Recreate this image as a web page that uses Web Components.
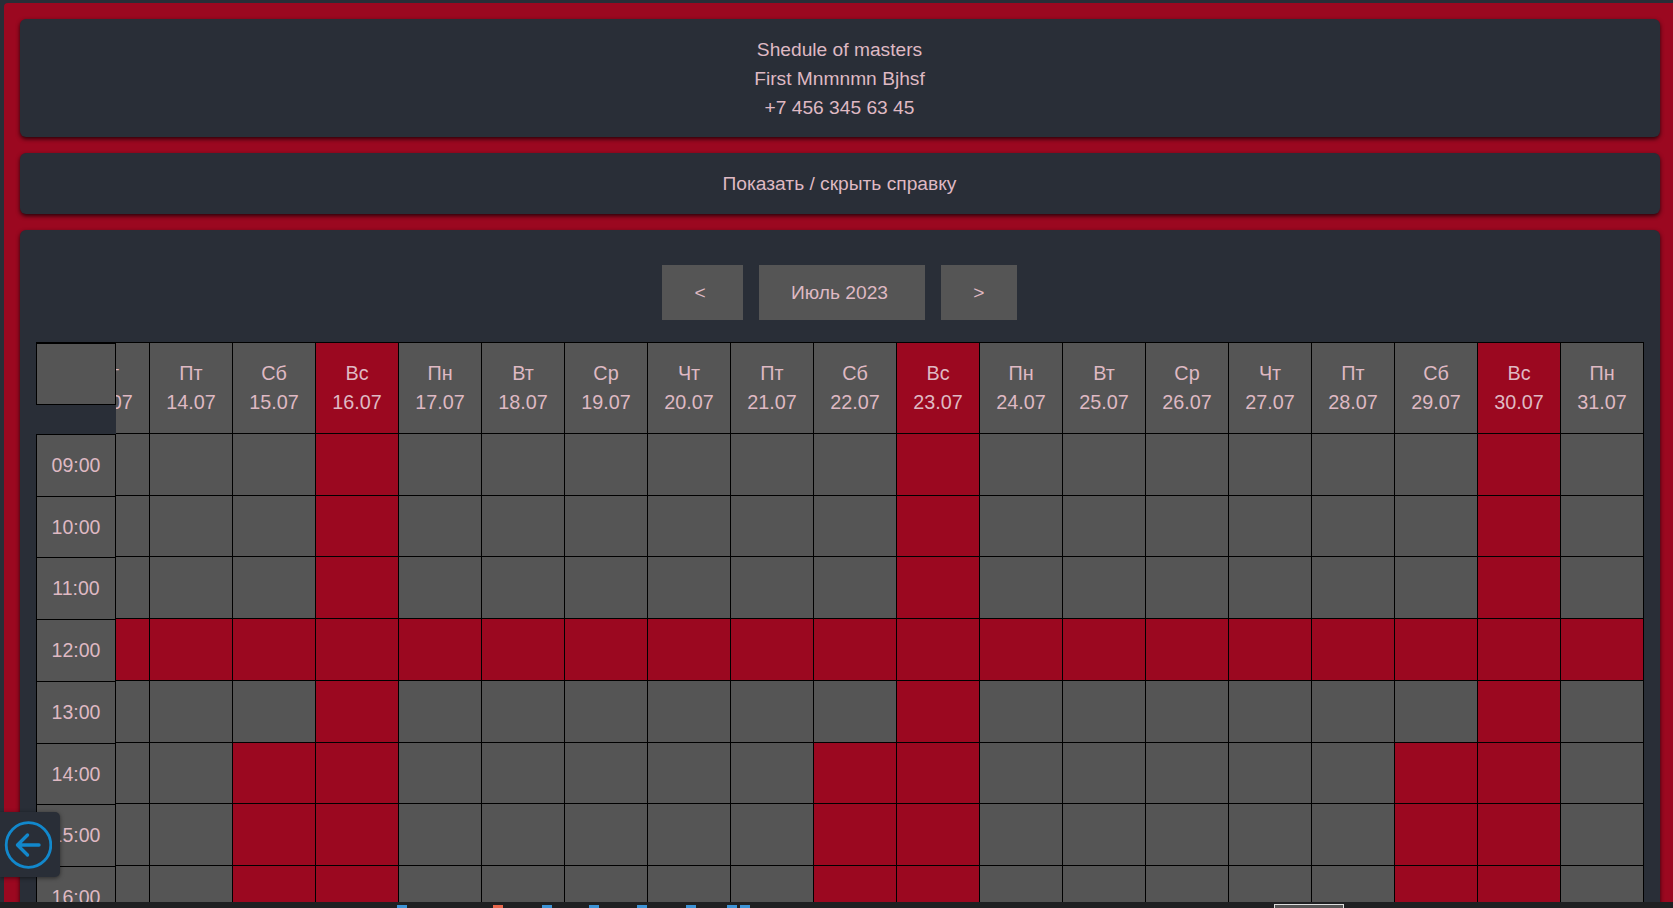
<!DOCTYPE html>
<html lang="ru">
<head>
<meta charset="utf-8">
<title>Shedule of masters</title>
<style>
  html, body { margin: 0; height: 908px; overflow: hidden; background: #292e37; }
  body { font: 19.2px/28.8px "Liberation Sans", Arial, sans-serif; color: #dfb9c3; }
</style>
</head>
<body>
<schedule-page>
  <info-card>
    <div>Shedule of masters</div>
    <div>First Mnmnmn Bjhsf</div>
    <div>+7 456 345 63 45</div>
  </info-card>
  <info-card>Показать / скрыть справку</info-card>
  <info-card>
    <month-nav month="Июль 2023"></month-nav>
    <schedule-table></schedule-table>
  </info-card>
</schedule-page>
<back-button></back-button>
<task-strip></task-strip>

<script>
class SchedulePage extends HTMLElement {
  connectedCallback() {
    this.attachShadow({ mode: 'open' });
    this.shadowRoot.innerHTML = `
      <style>
        :host {
          display: flex;
          flex-direction: column;
          gap: 16px;
          height: 905px;
          box-sizing: border-box;
          margin: 3px 0 0 4px;
          padding: 16px 13px 0 16px;
          background: #9b0820;
          border-radius: 4px 0 0 0;
          overflow: hidden;
        }
      </style>
      <slot></slot>
    `;
  }
}

class InfoCard extends HTMLElement {
  connectedCallback() {
    this.attachShadow({ mode: 'open' });
    this.shadowRoot.innerHTML = `
      <style>
        :host {
          display: block;
          flex: none;
          padding: 17px 17px 15px 16px;
          text-align: center;
          background: #292e37;
          border-radius: 6px;
          box-shadow: 0 2px 4px rgba(0, 0, 0, 0.75);
        }
      </style>
      <slot></slot>
    `;
  }
}

class MonthNav extends HTMLElement {
  connectedCallback() {
    this.attachShadow({ mode: 'open' });
    this.shadowRoot.innerHTML = `
      <style>
        :host {
          display: flex;
          justify-content: center;
          gap: 16px;
          margin: 18px 0 22px;
        }
        .btn {
          padding: 14px 32px 12px;
          background: #555;
        }
      </style>
      <div class="btn">&lt;&nbsp;</div>
      <div class="btn">${this.getAttribute('month')}&nbsp;</div>
      <div class="btn">&gt;</div>
    `;
  }
}

const WEEK = ['Вс', 'Пн', 'Вт', 'Ср', 'Чт', 'Пт', 'Сб'];
const HOURS = ['09:00', '10:00', '11:00', '12:00', '13:00', '14:00', '15:00', '16:00', '17:00'];

class ScheduleTable extends HTMLElement {
  connectedCallback() {
    const days = [];
    for (let d = 13; d <= 31; d++) days.push(d);

    // days scrolled partly under the time column, grid is aligned to the right
    let head = '';
    let body = '';
    days.forEach((d) => {
      const wd = new Date(2023, 6, d).getDay();
      head += `<div class="cell head ${wd === 0 ? 'off' : ''}">${WEEK[wd]}<br>${d}.07</div>`;
    });
    HOURS.forEach((h) => {
      days.forEach((d) => {
        const wd = new Date(2023, 6, d).getDay();
        const busy = wd === 0 || h === '12:00' || (wd === 6 && ['14:00', '15:00', '16:00', '17:00'].includes(h));
        body += `<div class="cell ${busy ? 'off' : ''}"></div>`;
      });
    });

    this.attachShadow({ mode: 'open' });
    this.shadowRoot.innerHTML = `
      <style>
        :host {
          display: block;
          position: relative;
          overflow: hidden;
          margin-right: -1px;
          font-size: 19.8px;
        }
        .grid {
          display: grid;
          grid-template-columns: repeat(${days.length}, 83px);
          justify-content: end;
          border-top: 1px solid #000;
        }
        .cell {
          box-sizing: border-box;
          height: 61.75px;
          padding: 16px 0;
          text-align: center;
          background: #555;
          border-right: 1px solid #000;
          border-bottom: 1px solid #000;
        }
        .head { height: 91px; }
        .off { background: #9b0820; }
        .times {
          position: absolute;
          left: 0;
          top: 1px;
          width: 80px;
          background: #292e37;
          text-align: center;
          font-size: 19.5px;
        }
        .corner {
          box-sizing: border-box;
          height: 62.5px;
          margin-bottom: 28.3px;
          background: #555;
          border: 1px solid #000;
        }
        .list { border-top: 1px solid #000; }
        .time {
          box-sizing: border-box;
          height: 61.75px;
          padding: 16px 0;
          background: #555;
          border: 1px solid #000;
          border-top: 0;
        }
      </style>
      <div class="grid">${head}${body}</div>
      <div class="times">
        <div class="corner"></div>
        <div class="list">${HOURS.map((h) => `<div class="time">${h}</div>`).join('')}</div>
      </div>
    `;
  }
}

class BackButton extends HTMLElement {
  connectedCallback() {
    this.attachShadow({ mode: 'open' });
    this.shadowRoot.innerHTML = `
      <style>
        :host {
          display: flex;
          align-items: center;
          position: fixed;
          left: 0;
          top: 812px;
          width: 60px;
          height: 65px;
          background: #292e37;
          border-radius: 0 5px 5px 0;
          box-shadow: 0 1px 4px rgba(0, 0, 0, 0.5);
        }
        svg { display: block; margin-left: 4px; }
      </style>
      <svg width="48" height="48" viewBox="0 0 48 48" fill="none" stroke="#1288cc" stroke-width="2.8" stroke-linecap="round" stroke-linejoin="round">
        <circle cx="24.5" cy="24" r="22.3"/>
        <path d="M13.5 24H35M23.5 14L13.5 24L23.5 34" stroke-width="3.4"/>
      </svg>
    `;
  }
}

class TaskStrip extends HTMLElement {
  connectedCallback() {
    const marks = [[397, '#3d93d6'], [493, '#e8674c'], [542, '#3d93d6'], [589, '#3d93d6'],
      [637, '#3d93d6'], [686, '#3d93d6'], [727, '#3d93d6'], [740, '#3d93d6']];
    this.attachShadow({ mode: 'open' });
    this.shadowRoot.innerHTML = `
      <style>
        :host {
          display: block;
          position: fixed;
          left: 0;
          right: 0;
          bottom: 0;
          height: 6px;
          background: #1f2022;
        }
        i {
          position: absolute;
          top: 3px;
          width: 10px;
          height: 3px;
        }
        .win {
          position: absolute;
          left: 1274px;
          top: 2px;
          width: 68px;
          height: 4px;
          background: #555;
          border: 1px solid #ddd;
          border-bottom: 0;
        }
      </style>
      ${marks.map(([x, c]) => `<i style="left:${x}px;background:${c}"></i>`).join('')}
      <div class="win"></div>
    `;
  }
}

customElements.define('schedule-page', SchedulePage);
customElements.define('info-card', InfoCard);
customElements.define('month-nav', MonthNav);
customElements.define('schedule-table', ScheduleTable);
customElements.define('back-button', BackButton);
customElements.define('task-strip', TaskStrip);
</script>
</body>
</html>
